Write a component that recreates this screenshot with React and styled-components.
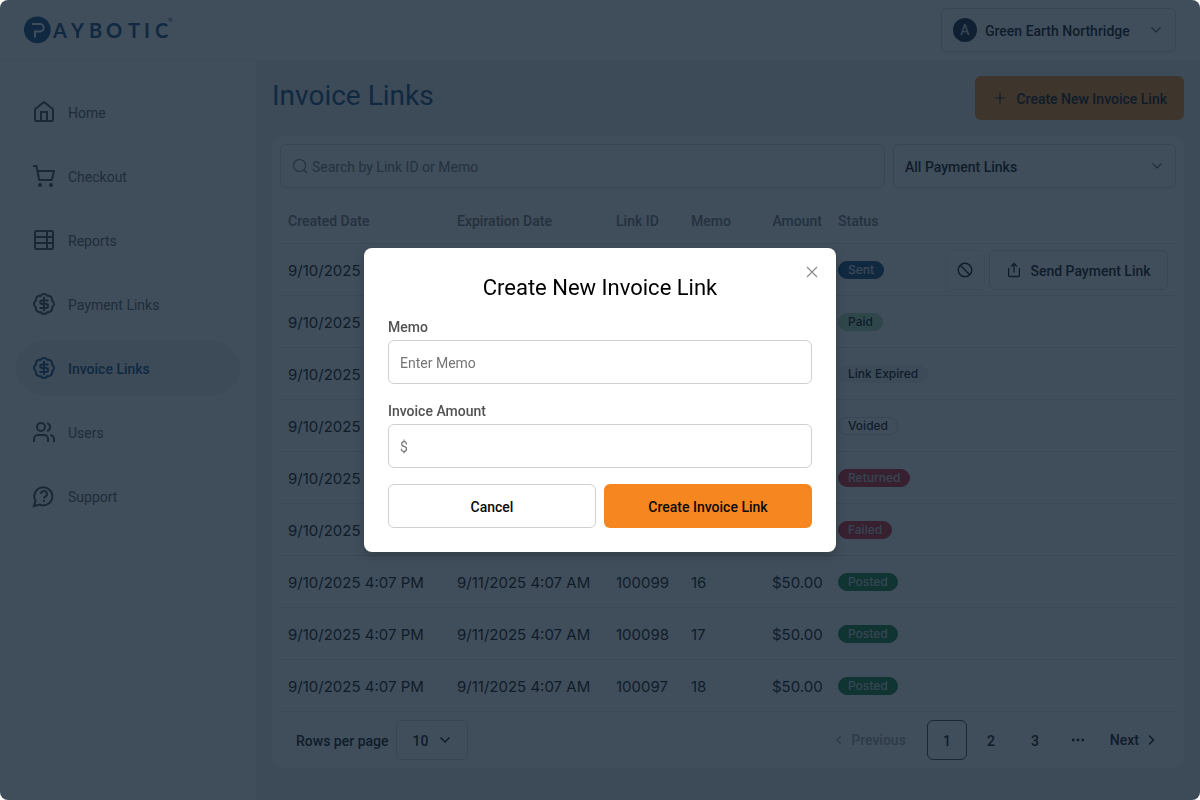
import React from "react";
import styled, { createGlobalStyle, css } from "styled-components";

const GlobalStyle = createGlobalStyle`
  *, *::before, *::after { box-sizing: border-box; }
  body { margin: 0; background: #fff; }
  body, button, input, select {
    font-family: Roboto, "Liberation Sans", sans-serif;
    font-size: 14px;
    line-height: 20px;
    color: #0a0a0a;
  }
  button { cursor: pointer; }
  svg { flex-shrink: 0; }
`;

const Page = styled.div`
  min-height: 100vh;
  display: flex;
  flex-direction: column;
  background: #eeeeee;
`;

const Header = styled.header`
  display: flex;
  align-items: center;
  justify-content: space-between;
  height: 61px;
  padding: 0 24px;
  background: #fff;
  border-bottom: 1px solid #f0f0f0;
`;

const control = css`
  border: 1px solid #d4d4d4;
  border-radius: 6px;
  background: #fff;
`;

const Text = styled.span`
  padding-top: 2px;
`;

const AccountButton = styled.button`
  ${control}
  display: flex;
  align-items: center;
  gap: 8px;
  height: 44px;
  padding: 0 11px;
  font-weight: 500;
  svg { color: #525252; }
`;

const AccountName = styled(Text)`
  min-width: 149px;
  margin-right: 6px;
  text-align: left;
`;

const Avatar = styled.span`
  display: grid;
  place-items: center;
  width: 24px;
  height: 24px;
  border-radius: 50%;
  background: #0b2239;
  color: #d4d4d4;
`;

const Body = styled.div`
  flex: 1;
  display: grid;
  grid-template-columns: 256px minmax(0, 1fr);
`;

const Sidebar = styled.nav`
  display: flex;
  flex-direction: column;
  gap: 8px;
  padding: 23px 16px;
  background: #fff;
`;

const NavItem = styled.a`
  display: flex;
  align-items: center;
  gap: 12px;
  height: 56px;
  padding: 0 16px;
  border-radius: 28px;
  text-decoration: none;
  font-weight: ${(p) => (p.$active ? 500 : 400)};
  color: ${(p) => (p.$active ? "#0f4a80" : "#5c5c5c")};
  background: ${(p) => (p.$active ? "#f0f0f0" : "transparent")};
  svg { color: ${(p) => (p.$active ? "#0f4a80" : "#404040")}; }
`;

const Main = styled.main`
  padding: 15px 16px 32px;
`;

const TitleRow = styled.div`
  display: flex;
  align-items: center;
  justify-content: space-between;
  margin-bottom: 16px;
`;

const PageTitle = styled.h1`
  margin: 0 0 4px;
  font-size: 28px;
  line-height: 36px;
  font-weight: 400;
  color: #0f4a80;
`;

const PrimaryButton = styled.button`
  display: flex;
  align-items: center;
  justify-content: center;
  gap: 8px;
  height: 44px;
  padding: 0 17px;
  border: 0;
  border-radius: 6px;
  background: #f6861f;
  font-weight: 500;
`;

const Card = styled.section`
  padding: 8px;
  border-radius: 10px;
  background: #fff;
`;

const Filters = styled.div`
  display: grid;
  grid-template-columns: minmax(0, 605fr) minmax(0, 283fr);
  gap: 8px;
  margin-bottom: 8px;
`;

const SearchBox = styled.label`
  ${control}
  display: flex;
  align-items: center;
  gap: 4px;
  height: 44px;
  padding: 0 11px;
  color: #737373;
  input {
    flex: 1;
    min-width: 0;
    padding: 2px 0 0;
    border: 0;
    outline: 0;
    background: transparent;
  }
  input::placeholder { color: #737373; opacity: 1; }
`;

const SelectBox = styled.span`
  position: relative;
  display: block;
  color: ${(p) => (p.$compact ? "#0a0a0a" : "#525252")};
  svg {
    position: absolute;
    right: ${(p) => (p.$compact ? "15px" : "11px")};
    top: 0;
    bottom: 0;
    margin: auto 0;
    pointer-events: none;
  }
`;

const Select = styled.select`
  ${control}
  appearance: none;
  width: 100%;
  height: ${(p) => (p.$compact ? "40px" : "44px")};
  padding: ${(p) => (p.$compact ? "2px 39px 0 15px" : "2px 36px 0 11px")};
  font-weight: 500;
`;

const Table = styled.table`
  width: 100%;
  table-layout: fixed;
  border-collapse: separate;
  border-spacing: 0;
`;

const Th = styled.th`
  height: 48px;
  padding: 2px 8px 0;
  border-bottom: 1px solid #e5e5e5;
  text-align: ${(p) => (p.$right ? "right" : "left")};
  font-weight: 500;
  color: #737373;
  white-space: nowrap;
`;

const Td = styled.td`
  height: 52px;
  padding: 0 8px;
  border-bottom: 1px solid #e5e5e5;
  white-space: nowrap;
`;

const TextTd = styled(Td)`
  padding-top: 2px;
  text-align: ${(p) => (p.$right ? "right" : "left")};
  font-family: Inter, "Liberation Sans", sans-serif;
  font-size: 15px;
`;

const tones = {
  Sent: ["#0f4a80", "#e5e5e5"],
  Paid: ["#a9dfb2", "#0a0a0a"],
  "Link Expired": ["#eeeeee", "#0a0a0a"],
  Voided: ["#ffffff", "#0a0a0a"],
  Returned: ["#d3202f", "#d4d4d4"],
  Failed: ["#d3202f", "#d4d4d4"],
  Posted: ["#12803a", "#d4d4d4"],
};

const Badge = styled.span`
  display: block;
  width: fit-content;
  padding: 0 9px;
  border: 1px solid ${(p) => (p.$tone === "Voided" ? "#d4d4d4" : tones[p.$tone][0])};
  border-radius: 9px;
  background: ${(p) => tones[p.$tone][0]};
  color: ${(p) => tones[p.$tone][1]};
  font-family: Inter, "Liberation Sans", sans-serif;
  font-size: 12px;
  line-height: 16px;
  font-weight: 500;
`;

const Actions = styled.div`
  display: flex;
  justify-content: flex-end;
  gap: 4px;
`;

const OutlineButton = styled.button`
  ${control}
  display: flex;
  align-items: center;
  justify-content: center;
  gap: 8px;
  height: 40px;
  min-width: ${(p) => (p.$icon ? "40px" : "179px")};
  padding: ${(p) => (p.$icon ? "0" : "0 15px")};
  border-color: ${(p) => (p.$icon ? "#ececec" : "#d4d4d4")};
  font-weight: 500;
  white-space: nowrap;
`;

const TableFooter = styled.footer`
  display: flex;
  align-items: center;
  justify-content: space-between;
  padding: 8px 8px 0 16px;
`;

const RowsPerPage = styled.label`
  display: flex;
  align-items: center;
  gap: 8px;
  font-weight: 500;
`;

const Pager = styled.nav`
  display: flex;
  align-items: center;
  gap: 4px;
`;

const PageButton = styled.button`
  display: flex;
  align-items: center;
  justify-content: center;
  gap: 4px;
  height: 40px;
  min-width: 40px;
  padding: ${(p) => (p.$step ? "0 8px" : "2px 0 0")};
  margin-right: ${(p) => (p.$prev ? "8px" : "0")};
  border: 1px solid ${(p) => (p.$current ? "#404040" : "transparent")};
  border-radius: 6px;
  background: transparent;
  font-weight: 500;
  &:disabled { color: #a3a3a3; }
`;

const Ellipsis = styled.span`
  display: grid;
  place-items: center;
  width: 38px;
`;

const Backdrop = styled.div`
  position: fixed;
  inset: 0;
  display: grid;
  place-items: center;
  border-radius: 8px;
  background: rgba(16, 33, 49, 0.8);
  box-shadow: 0 0 0 20px #fff;
`;

const Dialog = styled.form`
  position: relative;
  width: min(472px, calc(100% - 32px));
  padding: 24px;
  border-radius: 8px;
  background: #fff;
  box-shadow: 0 4px 10px rgba(0, 0, 0, 0.2);
`;

const DialogTitle = styled.h2`
  margin: 0 0 13px;
  text-align: center;
  font-size: 22px;
  line-height: 32px;
  font-weight: 400;
  color: #000;
`;

const CloseButton = styled.button`
  position: absolute;
  top: 16px;
  right: 16px;
  display: grid;
  place-items: center;
  padding: 0;
  border: 0;
  background: transparent;
  color: #8a8a8a;
`;

const Field = styled.label`
  display: block;
  margin-bottom: ${(p) => (p.$last ? "16px" : "17px")};
  font-weight: 500;
  color: #525252;
`;

const TextInput = styled.input`
  ${control}
  display: block;
  width: 100%;
  height: 44px;
  margin-top: 3px;
  padding: 2px 11px 0;
  border-color: #d0d0d0;
  &::placeholder { color: #757575; opacity: 1; }
`;

const DialogActions = styled.div`
  display: grid;
  grid-template-columns: 1fr 1fr;
  gap: 8px;
`;

const CancelButton = styled(PrimaryButton)`
  ${control}
  border-color: #d0d0d0;
`;

function Icon({ size = 16, box = 24, width = 2, children }) {
  return (
    <svg width={size} height={size} viewBox={`0 0 ${box} ${box}`} fill="none" stroke="currentColor" strokeWidth={width} aria-hidden="true">
      {children}
    </svg>
  );
}

const ChevronDown = ({ width = 1.2 }) => (
  <Icon box={16} width={width}><path d="M3.500 5.500 8 10l4.500-4.500" /></Icon>
);

function Logo() {
  return (
    <svg width="152" height="32" viewBox="0 0 152 32" role="img" aria-label="Paybotic">
      <circle cx="13.300" cy="15.800" r="13.400" fill="#0f4a80" />
      <path d="M8 10h8a3.700 3.700 0 0 1 0 7.400h-5v6" fill="none" stroke="#fff" strokeWidth="2" />
      <text x="29 47 65 82 104 120 131" y="23.500" fontFamily="Lato, sans-serif" fontWeight="700" fontSize="20" fill="#0f4a80">AYBOTIC</text>
      <text x="144" y="8" fontFamily="Lato, sans-serif" fontSize="6" fill="#0f4a80">®</text>
    </svg>
  );
}

const DollarBadge = () => (
  <>
    <path d="M3.850 8.620a4 4 0 0 1 4.780-4.770 4 4 0 0 1 6.740 0 4 4 0 0 1 4.780 4.780 4 4 0 0 1 0 6.740 4 4 0 0 1-4.770 4.780 4 4 0 0 1-6.750 0 4 4 0 0 1-4.780-4.770 4 4 0 0 1 0-6.760Z" />
    <path d="M16.500 8.500H10a1.750 1.750 0 0 0 0 3.500h4a2 2 0 1 1 0 4H7.500M12 5v14" />
  </>
);

const navItems = [
  ["Home", <><path d="M3 9.200 12 2l9 7.200V20a1 1 0 0 1-1 1H4a1 1 0 0 1-1-1Z" strokeLinejoin="round" /><path d="M9 21v-9h6v9" /></>],
  ["Checkout", <><path d="M1 2h3.500l2.700 14h12.600L22 7H5.500" strokeLinejoin="round" /><circle cx="8" cy="21" r="2" fill="currentColor" stroke="none" /><circle cx="19" cy="21" r="2" fill="currentColor" stroke="none" /></>],
  ["Reports", <><rect x="3" y="3" width="18" height="18" rx="1.500" /><path d="M3 9h18M3 15h18M15 3v18" /></>],
  ["Payment Links", <DollarBadge />],
  ["Invoice Links", <DollarBadge />],
  ["Users", <><circle cx="9" cy="7" r="4" /><path d="M2 22v-3a4 4 0 0 1 4-4h6a4 4 0 0 1 4 4v3M15 3.100a4 4 0 0 1 0 7.800M18.200 15.300A4 4 0 0 1 22 19v3" /></>],
  ["Support", <><path d="M2 22l1.500-5.200A9 9 0 1 1 7.500 20.500Z" /><path d="M9 10a3 3 0 1 1 4.200 2.700C12.400 13 12 13.500 12 14.500M12 16v2" /></>],
];

const statuses = ["Sent", "Paid", "Link Expired", "Voided", "Returned", "Failed", "Posted", "Posted", "Posted"];
const rows = statuses.map((status, i) => ({
  status,
  created: "9/10/2025 4:07 PM",
  expires: "9/11/2025 4:07 AM",
  id: 100105 - i,
  memo: 10 + i,
  amount: "$50.00",
}));

export default function App() {
  return (
    <>
      <GlobalStyle />
      <Page>
        <Header>
          <Logo />
          <AccountButton type="button">
            <Avatar>A</Avatar>
            <AccountName>Green Earth Northridge</AccountName>
            <ChevronDown />
          </AccountButton>
        </Header>
        <Body>
          <Sidebar aria-label="Primary">
            {navItems.map(([label, drawing]) => (
              <NavItem key={label} href="#" $active={label === "Invoice Links"}>
                <Icon size={24}>{drawing}</Icon>
                <Text>{label}</Text>
              </NavItem>
            ))}
          </Sidebar>
          <Main>
            <TitleRow>
              <PageTitle>Invoice Links</PageTitle>
              <PrimaryButton type="button">
                <Icon box={16} width={1.2}><path d="M8 2.500v11M2.500 8h11" /></Icon>
                <Text>Create New Invoice Link</Text>
              </PrimaryButton>
            </TitleRow>
            <Card>
              <Filters>
                <SearchBox>
                  <Icon box={16} width={1.2}><circle cx="7.500" cy="7.500" r="6" /><path d="m12 12 3 3" /></Icon>
                  <input type="search" aria-label="Search" placeholder="Search by Link ID or Memo" />
                </SearchBox>
                <SelectBox>
                  <Select aria-label="Filter links" defaultValue="all">
                    <option value="all">All Payment Links</option>
                  </Select>
                  <ChevronDown />
                </SelectBox>
              </Filters>
              <Table>
                <colgroup>
                  <col width="169" /><col width="159" /><col width="75" /><col width="81" /><col width="66" /><col width="107" /><col />
                </colgroup>
                <thead>
                  <tr>
                    <Th>Created Date</Th>
                    <Th>Expiration Date</Th>
                    <Th>Link ID</Th>
                    <Th>Memo</Th>
                    <Th $right>Amount</Th>
                    <Th>Status</Th>
                    <Th aria-label="Actions" />
                  </tr>
                </thead>
                <tbody>
                  {rows.map((row) => (
                    <tr key={row.id}>
                      <TextTd>{row.created}</TextTd>
                      <TextTd>{row.expires}</TextTd>
                      <TextTd>{row.id}</TextTd>
                      <TextTd>{row.memo}</TextTd>
                      <TextTd $right>{row.amount}</TextTd>
                      <Td><Badge $tone={row.status}>{row.status}</Badge></Td>
                      <Td>
                        {row.status === "Sent" && (
                          <Actions>
                            <OutlineButton type="button" $icon aria-label="Void link">
                              <Icon box={16} width={1.4}><circle cx="8" cy="8" r="6.800" /><path d="m3.200 3.200 9.600 9.600" /></Icon>
                            </OutlineButton>
                            <OutlineButton type="button">
                              <Icon box={16} width={1.3}><path d="M2.600 6v7.500a1 1 0 0 0 1 1h8.800a1 1 0 0 0 1-1V6M8 10.500V1.500M5 4.500l3-3 3 3" /></Icon>
                              <Text>Send Payment Link</Text>
                            </OutlineButton>
                          </Actions>
                        )}
                      </Td>
                    </tr>
                  ))}
                </tbody>
              </Table>
              <TableFooter>
                <RowsPerPage>
                  <Text>Rows per page</Text>
                  <SelectBox $compact>
                    <Select $compact defaultValue="10"><option>10</option></Select>
                    <ChevronDown width={1.5} />
                  </SelectBox>
                </RowsPerPage>
                <Pager aria-label="Pagination">
                  <PageButton type="button" $step $prev disabled>
                    <Icon box={16} width={1.5}><path d="M10 4 6 8l4 4" /></Icon>
                    Previous
                  </PageButton>
                  <PageButton type="button" $current aria-current="page">1</PageButton>
                  <PageButton type="button">2</PageButton>
                  <PageButton type="button">3</PageButton>
                  <Ellipsis>
                    <Icon box={16}><g fill="currentColor" stroke="none"><circle cx="3.200" cy="8" r="1.400" /><circle cx="8" cy="8" r="1.400" /><circle cx="12.800" cy="8" r="1.400" /></g></Icon>
                  </Ellipsis>
                  <PageButton type="button" $step>
                    Next
                    <Icon box={16} width={1.5}><path d="m6 3.500 4.500 4.500L6 12.500" /></Icon>
                  </PageButton>
                </Pager>
              </TableFooter>
            </Card>
          </Main>
        </Body>
      </Page>
      <Backdrop>
        <Dialog role="dialog" aria-modal="true" aria-labelledby="dialog-title">
          <CloseButton type="button" aria-label="Close">
            <Icon box={16} width={1.2}><path d="m3 3 10 10M13 3 3 13" /></Icon>
          </CloseButton>
          <DialogTitle id="dialog-title">Create New Invoice Link</DialogTitle>
          <Field>
            Memo
            <TextInput type="text" placeholder="Enter Memo" />
          </Field>
          <Field $last>
            Invoice Amount
            <TextInput type="text" inputMode="decimal" placeholder="$" />
          </Field>
          <DialogActions>
            <CancelButton type="button"><Text>Cancel</Text></CancelButton>
            <PrimaryButton type="submit"><Text>Create Invoice Link</Text></PrimaryButton>
          </DialogActions>
        </Dialog>
      </Backdrop>
    </>
  );
}
